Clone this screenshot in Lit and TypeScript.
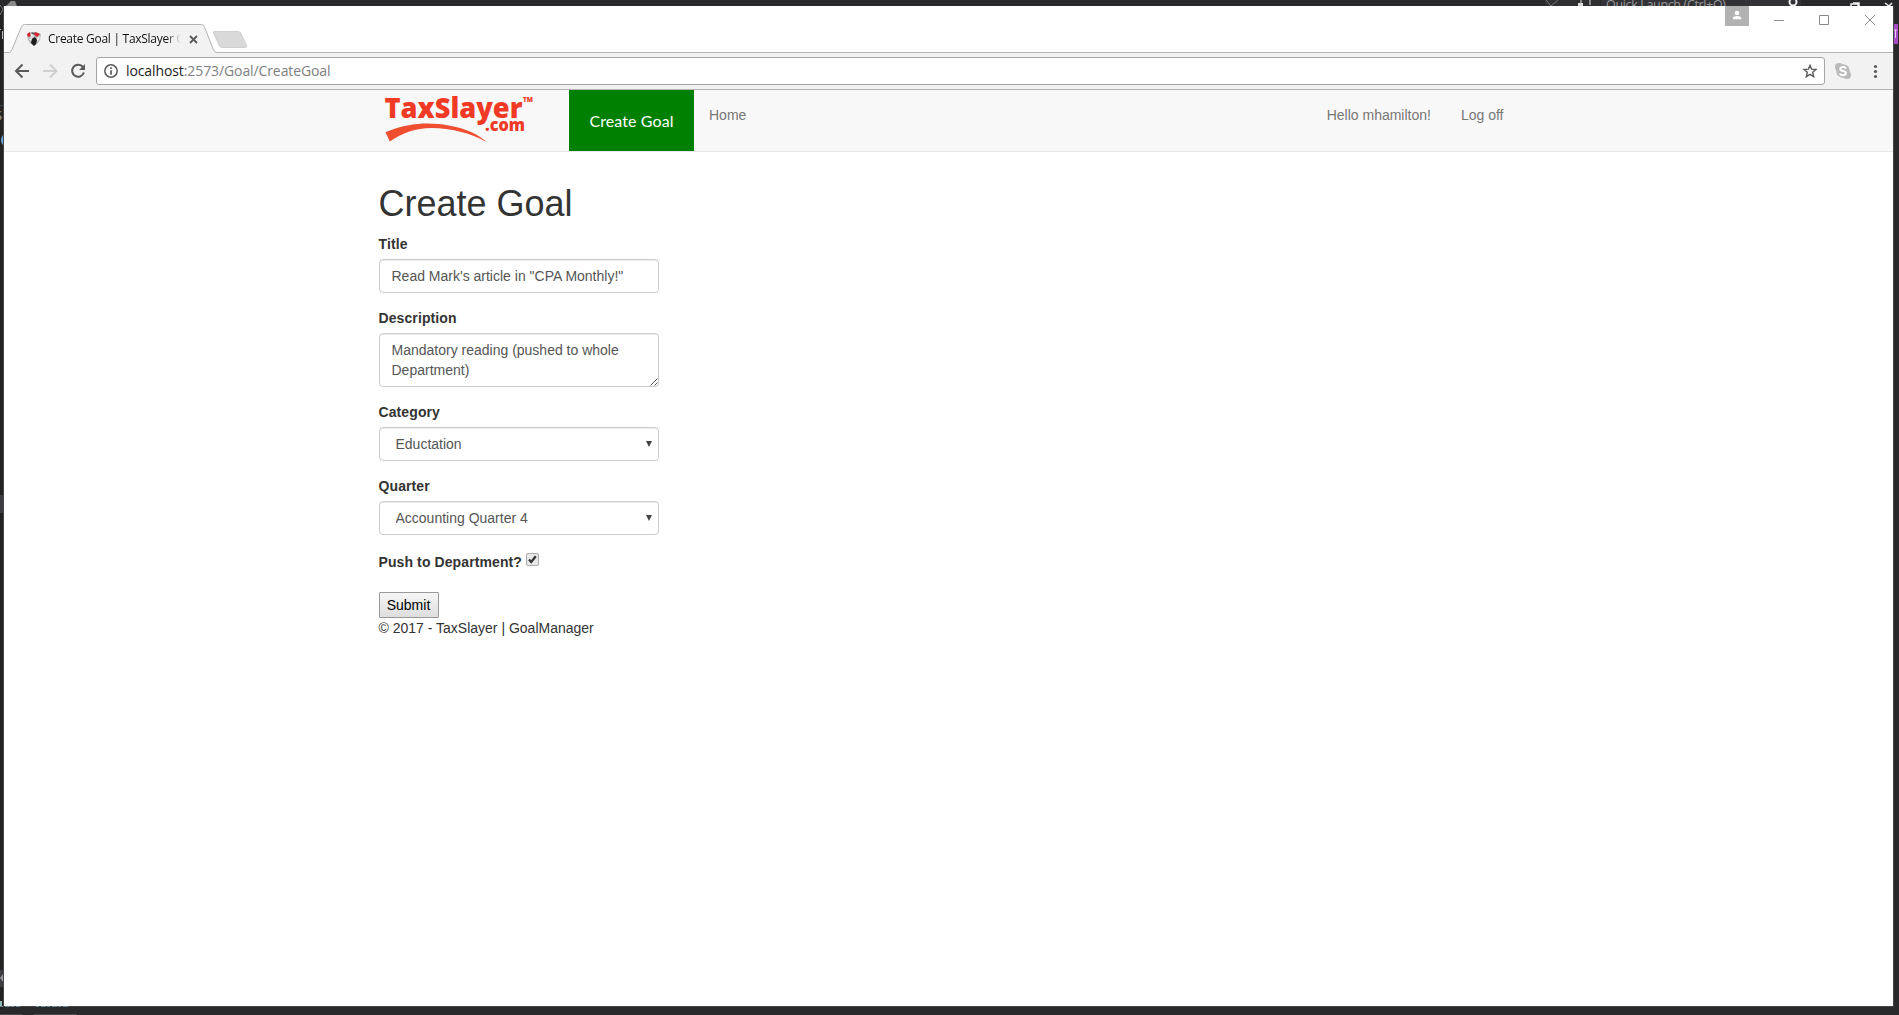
import { LitElement, html, css, svg } from "lit";
import { customElement } from "lit/decorators.js";

@customElement("desktop-backdrop")
class DesktopBackdrop extends LitElement {
  static styles = css`
    :host { position: absolute; inset: 0; display: block; }
    svg { display: block; width: 100%; height: 100%; }
  `;
  render() {
    return html`<svg viewBox="0 0 1899 1015" font-family="Open Sans, sans-serif">
      <rect width="1899" height="1015" fill="#29292b" />
      <rect y="6" width="4" height="1003" fill="#222" />
      <path d="M0 5 L3 9 L0 15" fill="none" stroke="#777" />
      <path d="M6 6 L11 1 L15 1 L17 6Z" fill="#8a8a8a" />
      <rect x="1545" width="55" height="6" fill="#303033" />
      <path d="M1546 0 L1551 6 L1558 0" fill="none" stroke="#777" />
      <rect x="1578" y="3" width="5" height="3" fill="#ddd" />
      <path d="M1581 0v4M1590 0v5" stroke="#ddd" />
      <rect x="1601" width="200" height="6" fill="#333337" />
      <text x="1606" y="9" font-size="12.5" textLength="120" fill="#999">Quick Launch (Ctrl+Q)</text>
      <circle cx="1793" cy="2" r="3.5" fill="none" stroke="#eee" stroke-width="2" />
      <path d="M1851 6V4h7v2M1853 3h6v3M1885 3l4 3 3-3" fill="none" stroke="#eee" stroke-width="1.5" />
      <rect x="1893" y="24" width="5" height="20" fill="#a54bc4" />
      <path d="M1893 30h4M1895.5 30v8" stroke="#e5c8ee" />
      <path d="M0.5 29v1M2.5 31v8" stroke="#b9b9c0" />
      <text x="-5" y="120" font-size="13" fill="#a9a99a">S</text>
      <path d="M4 135Q0 140 4 145" fill="none" stroke="#69a8e6" stroke-width="2" />
      <rect y="105" width="4" height="1" fill="#444" />
      <rect y="495" width="4" height="18" fill="#3c3c41" />
      <rect y="970" width="4" height="17" fill="#3c3c41" />
      <path d="M4 973L0 978L4 983Z" fill="#999" />
      <rect y="1001" width="2" height="5" fill="#8cb7b4" />
      <rect x="3" y="6" width="1" height="1001" fill="#454547" />
      <rect x="1893" y="6" width="1" height="1001" fill="#454547" />
      <rect x="4" y="1006" width="1890" height="1" fill="#454547" />
      <path d="M0 1006.5H20M36 1006.5H68" stroke="#6d8b95" stroke-dasharray="3 2 5 1" />
      <path d="M0 1014.5H22M34 1014.5H77" stroke="#4b4b4f" />
    </svg>`;
  }
}

@customElement("browser-tabs")
class BrowserTabs extends LitElement {
  static styles = css`
    :host { display: flex; height: 47px; background: #fff; position: relative; font-family: "Open Sans", sans-serif; }
    .shape { position: absolute; left: 0; top: 0; width: 100%; height: 47px; display: block; }
    .tab { position: relative; display: flex; align-items: center; height: 29px; margin: 18px 0 0 22px; }
    .favicon { width: 16px; height: 16px; margin-top: 1px; }
    .title { margin-left: 6px; width: 132px; overflow: hidden; white-space: nowrap; font-size: 12px; line-height: 17px; color: #111;
      -webkit-mask-image: linear-gradient(90deg, #000 118px, transparent 133px); mask-image: linear-gradient(90deg, #000 118px, transparent 133px); }
    .title span { display: inline-block; letter-spacing: -0.28px; }
    .close { width: 9px; height: 9px; margin: 1px 0 0 9px; }
    .controls { position: relative; margin-left: auto; display: flex; width: 168px; height: 24px; }
    .controls svg { display: block; width: 168px; height: 26px; }
  `;
  render() {
    return html`
      <svg class="shape" viewBox="0 0 1889 47" preserveAspectRatio="none">
        <path d="M0 46.5H5.5Q7 46 8 43.5L17.5 20.5Q18.5 18.5 20.5 18.5H197.500Q199.500 18.500 200.500 21L209.500 44Q210.500 46.500 213 46.500H1889V48H0Z" fill="#f2f2f2" stroke="#b3b3b3" />
        <path d="M210.500 25.500H234Q236 25.500 237 27.500L242.500 39.500Q243 41.500 241 41.500H218Q216 41.500 215 39L209.500 27Q209 25.500 210.500 25.500Z" fill="#d9d9d9" stroke="#cfcfcf" />
      </svg>
      <div class="tab">
        <svg class="favicon" viewBox="0 0 16 16">
          <path d="M1 3L6 1L8 2L10 1L15 3L14 9L11 13L8 15L4 12L2 9Z" fill="#b9b9b9" />
          <path d="M1 3L4 1L4.500 5L2 6ZM9 1L14 3L11 6L8 3.500Z" fill="#d8222c" />
          <path d="M5 2L8 5L5 7ZM3 8L6 7L5 10ZM11 7L14 5L13 9L11 10Z" fill="#f4f4f4" />
          <path d="M6 8L9 6L11 9L10 13L8 15L5 12Z" fill="#1d1d1d" />
          <path d="M5 1.500H9L8 3.500L6 3Z" fill="#555" />
        </svg>
        <div class="title"><span>Create Goal | TaxSlayer Goal</span></div>
        <svg class="close" viewBox="0 0 9 9"><path d="M1 1L8 8M8 1L1 8" stroke="#5a5a5a" stroke-width="1.8" /></svg>
      </div>
      <div class="controls">
        <svg viewBox="0 0 168 26">
          <rect width="24" height="20" fill="#b2b2b2" />
          <circle cx="12" cy="7" r="2.300" fill="#fff" />
          <path d="M7.800 13.200V12Q8 10 12 10T16.200 12V13.200Z" fill="#fff" />
          <path d="M49 14.500H59M94.500 9.500H103.500V18.500H94.500ZM140 9L150 19M150 9L140 19" fill="none" stroke="#8c8c8c" />
        </svg>
      </div>`;
  }
}

@customElement("browser-toolbar")
class BrowserToolbar extends LitElement {
  static styles = css`
    :host { display: flex; align-items: center; box-sizing: border-box; height: 37px; background: #f2f2f2; border-bottom: 1px solid #b3b3b3; font-family: "Open Sans", sans-serif; }
    .nav { width: 92px; height: 36px; flex: none; }
    .omnibox { flex: none; box-sizing: border-box; width: 1729px; height: 28px; border: 1px solid #a6a6a6; border-radius: 3px; background: #fff; display: flex; align-items: center; padding: 0 7px; }
    .info { width: 14px; height: 14px; }
    .url { margin-left: 8px; font-size: 14px; line-height: 20px; color: #808080; letter-spacing: -0.1px; }
    .url b { font-weight: 400; color: #222; }
    .star { margin-left: auto; width: 14px; height: 14px; }
    .tools { width: 68px; height: 36px; flex: none; }
  `;
  render() {
    return html`
      <svg class="nav" viewBox="0 0 92 36">
        <path d="M25 18H12.500M18.500 11.500L12 18L18.500 24.500" fill="none" stroke="#5a5a5a" stroke-width="2" />
        <path d="M39 18H52M46 11.500L52.500 18L46 24.500" fill="none" stroke="#d0d0d0" stroke-width="2" />
        <path d="M79 14.200A6 6 0 1 0 79.900 19.500" fill="none" stroke="#5a5a5a" stroke-width="2" />
        <path d="M81 11V17H75Z" fill="#5a5a5a" />
      </svg>
      <div class="omnibox">
        <svg class="info" viewBox="0 0 14 14"><circle cx="7" cy="7" r="6.200" fill="none" stroke="#5a5a5a" stroke-width="1.500" /><path d="M7 3.200V5M7 6.200V10.800" stroke="#5a5a5a" stroke-width="1.700" /></svg>
        <div class="url"><b>localhost</b>:2573/Goal/CreateGoal</div>
        <svg class="star" viewBox="0 0 14 14"><path d="M7 1.300L8.600 5.200L13 5.500L9.700 8.300L10.700 12.700L7 10.400L3.300 12.700L4.300 8.300L1 5.500L5.400 5.200Z" fill="none" stroke="#5a5a5a" stroke-width="1.400" /></svg>
      </div>
      <svg class="tools" viewBox="0 0 68 36">
        <circle cx="18" cy="18" r="6.800" fill="#b9b9b9" /><circle cx="14" cy="14" r="4" fill="#b9b9b9" /><circle cx="22" cy="22" r="4" fill="#b9b9b9" />
        <path d="M21 15.600Q20.500 14 18 14T15.200 16Q15.200 17.500 18 18T21 20.200Q20.800 22.200 18 22.200T15 20.300" fill="none" stroke="#fff" stroke-width="1.900" />
        <circle cx="50.500" cy="13.500" r="1.600" fill="#5a5a5a" /><circle cx="50.500" cy="18.500" r="1.600" fill="#5a5a5a" /><circle cx="50.500" cy="23.500" r="1.600" fill="#5a5a5a" />
      </svg>`;
  }
}

@customElement("site-navbar")
class SiteNavbar extends LitElement {
  static styles = css`
    :host { display: block; box-sizing: border-box; height: 62px; background: #f8f8f8; border-bottom: 1px solid #e7e7e7; }
    .inner { box-sizing: border-box; width: 1170px; margin: 0 auto; padding: 0 15px; height: 61px; display: flex; color: #777; font-size: 14px; line-height: 20px; }
    .logo { width: 160px; height: 61px; display: block; }
    .create { box-sizing: border-box; width: 125px; height: 61px; margin-left: 30.500px; background: #008000; color: #fff; text-align: center; font: 16px/61px "Lato", sans-serif; white-space: nowrap; }
    .create span { letter-spacing: 0.1px; }
    .link { padding: 15px; height: 20px; white-space: nowrap; }
    .right { margin-left: auto; display: flex; }
  `;
  render() {
    return html`<div class="inner">
      <svg class="logo" viewBox="378.500 90 160 61" font-family="Open Sans, sans-serif" font-weight="800" fill="#f03a26">
        <text x="384" y="117.700" font-size="28" textLength="138" lengthAdjust="spacingAndGlyphs">TaxSlayer</text>
        <text x="484.500" y="130.700" font-size="17" textLength="40" lengthAdjust="spacingAndGlyphs">.com</text>
        <text x="522.500" y="102" font-size="6" textLength="10" lengthAdjust="spacingAndGlyphs">TM</text>
        <path d="M385 132.300C410 122 430 122.500 448 125.500C466 128.500 479 135 486 142C470 133 450 128 431 128C415 128 402 133 389.300 141.500Z" fill="#f04e30" />
      </svg>
      <div class="create"><span>Create Goal</span></div>
      <div class="link">Home</div>
      <div class="right"><div class="link">Hello mhamilton!</div><div class="link">Log off</div></div>
    </div>`;
  }
}

@customElement("goal-form")
class GoalForm extends LitElement {
  static styles = css`
    :host { display: block; box-sizing: border-box; width: 1170px; margin: 0 auto; padding: 32px 15px 0; color: #333; font-size: 14px; line-height: 20px; }
    h2 { margin: 0 0 10px; font-size: 36px; line-height: 40px; font-weight: 400; }
    .group { display: flex; flex-direction: column; margin-bottom: 15px; width: 280px; }
    .label { display: block; font-weight: 700; margin-bottom: 5px; letter-spacing: 0.1px; }
    .control { display: block; box-sizing: border-box; width: 280px; height: 34px; margin: 0; padding: 6px 12px; font: inherit; color: #555; background: #fff; border: 1px solid #ccc; border-radius: 4px; box-shadow: inset 0 1px 1px rgba(0,0,0,.075); appearance: none; outline: 0; }
    textarea.control { height: 54px; resize: none; overflow: hidden; }
    select.control { padding-left: 16px; }
    .wrap { display: grid; }
    .wrap > * { grid-area: 1 / 1; }
    .grip { width: 8px; height: 8px; align-self: end; justify-self: end; margin: 0 1px 1px 0; z-index: 1; }
    .arrow { width: 6px; height: 6px; align-self: center; justify-self: end; margin-right: 7px; z-index: 1; pointer-events: none; }
    .check { display: flex; height: 20px; margin-top: 17px; }
    .check .label { margin: 0; white-space: nowrap; }
    .box { width: 13px; height: 13px; margin: 1px 0 0 4px; }
    .submit { display: block; box-sizing: border-box; width: 60px; height: 26px; margin: 20px 0 0; padding: 0; border: 1px solid #999; border-radius: 1px; background: linear-gradient(#f6f6f6, #dedede); color: #000; font: 14px/20px "Liberation Sans", Arial, sans-serif; }
  `;
  private select(label: string, value: string) {
    return html`<div class="group"><label class="label">${label}</label>
      <div class="wrap"><select class="control"><option>${value}</option></select>
      <svg class="arrow" viewBox="0 0 6 6"><path d="M0 0H6L3 6Z" fill="#444" /></svg></div></div>`;
  }
  render() {
    return html`
      <h2>Create Goal</h2>
      <div class="group"><label class="label">Title</label><input class="control" .value=${'Read Mark\'s article in "CPA Monthly!"'} /></div>
      <div class="group"><label class="label">Description</label>
        <div class="wrap"><textarea class="control" .value=${"Mandatory reading (pushed to whole Department)"}></textarea>
        <svg class="grip" viewBox="0 0 8 8"><path d="M0.500 7.500L7.500 0.500M4.500 7.500L7.500 4.500" stroke="#555" stroke-width="1" /></svg></div></div>
      ${this.select("Category", "Eductation")}
      ${this.select("Quarter", "Accounting Quarter 4")}
      <div class="check"><label class="label">Push to Department?</label>
        <svg class="box" viewBox="0 0 13 13"><rect x=".5" y=".5" width="12" height="12" rx="1.500" fill="#e8e8e8" stroke="#aaa" /><path d="M3 6.500L5.200 9L9.800 3.200" fill="none" stroke="#333" stroke-width="2.200" /></svg>
      </div>
      <button class="submit">Submit</button>
      <div>© 2017 - TaxSlayer | GoalManager</div>`;
  }
}

@customElement("app-root")
class AppRoot extends LitElement {
  static styles = css`
    :host { display: block; position: relative; width: 1899px; height: 1015px; overflow: hidden; background: #29292b; font-family: "Liberation Sans", Arial, sans-serif; }
    .window { position: absolute; left: 4px; top: 6px; width: 1889px; height: 1000px; display: flex; flex-direction: column; background: #fff; }
  `;
  render() {
    return html`<desktop-backdrop></desktop-backdrop>
      <div class="window">
        <browser-tabs></browser-tabs>
        <browser-toolbar></browser-toolbar>
        <site-navbar></site-navbar>
        <goal-form></goal-form>
      </div>`;
  }
}
